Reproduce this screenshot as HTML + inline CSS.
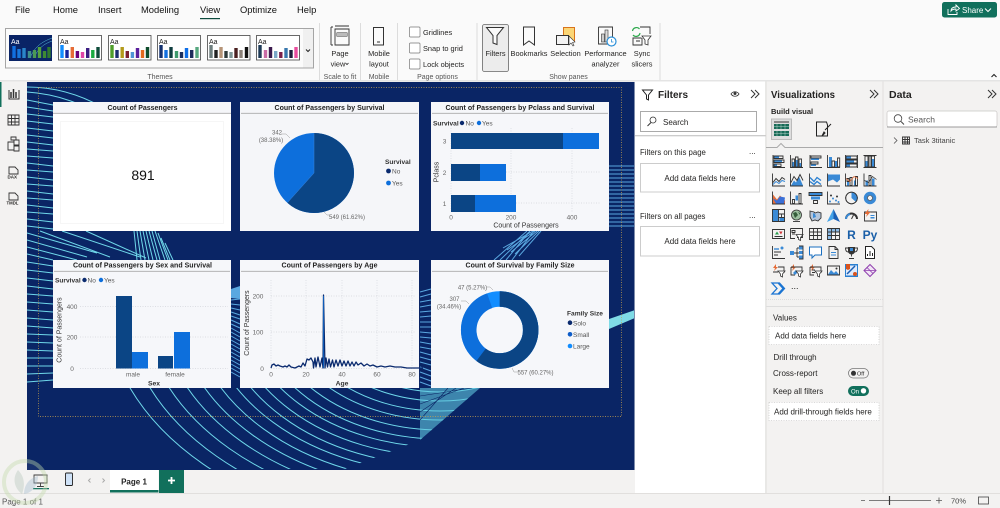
<!DOCTYPE html>
<html lang="en"><head><meta charset="utf-8"><title>Power BI Desktop</title>
<style>
html,body{margin:0;padding:0;width:1000px;height:508px;overflow:hidden;background:#f3f2f1}
svg{display:block}
text{font-family:"Liberation Sans",sans-serif;font-size:8px;fill:#252423}
.tab{font-size:9.4px;fill:#111}
.rb{font-size:7.4px;text-anchor:middle}
.grp{font-size:7px;text-anchor:middle;fill:#555}
.t{font-size:7px;font-weight:bold;text-anchor:middle;fill:#222}
.ax{font-size:6.5px;fill:#666;text-anchor:middle}
.axb{font-size:6.8px;fill:#333;text-anchor:middle;font-weight:bold}
.lb{font-size:6px;fill:#666;text-anchor:middle}
.lg{font-size:6.5px;fill:#555}
.lt{font-size:6.6px;fill:#333;font-weight:bold}
.h{font-size:10.5px;font-weight:bold;fill:#252423}
.s{font-size:8px;fill:#252423}
.ln{fill:none;stroke:#6fd8ea;stroke-width:1}
.lb2{fill:none;stroke:#5aa8e0;stroke-width:1}
.ic{fill:none;stroke:#333;stroke-width:.9}
.bl{fill:#3a8ad6;stroke:none}
.gr{stroke:#d3d6dc;stroke-width:.7;stroke-dasharray:1 1.5;fill:none}
.th{fill:#fff;stroke:#444;stroke-width:.8}
.tb{stroke-width:3.4;fill:none}
.sep{stroke:#dcdcdc;stroke-width:1}
</style></head><body>
<svg xmlns="http://www.w3.org/2000/svg" width="1000" height="508" viewBox="0 0 1000 508">
<defs>
<clipPath id="cv"><rect x="27" y="82" width="607" height="387"/></clipPath>
<clipPath id="arc"><path d="M27 388H480L420 440 345 469H27z"/></clipPath>
<g id="i1"><path class="ic" d="M1 0V12.5H13"/><path class="bl" d="M2 1h5v2.5H2zM2 5h8v2.5H2zM2 9h3v2.5H2z"/><path class="ic" d="M2 1h9v2.5H2zM2 5h10v2.5H2zM2 9h7v2.5H2z"/></g>
<g id="i2"><path class="ic" d="M.5 0V12.5H13"/><path class="bl" d="M2 7h2.5v5H2zM5.5 5h2.5v7H5.5zM9 8h2.5v4H9z"/><path class="ic" d="M2 4h2.5v8H2zM5.5 2h2.5v10H5.5zM9 4h2.5v8H9z"/></g>
<g id="i3"><path class="ic" d="M1 0V12.5H13"/><path class="bl" d="M2 3h8v2H2zM2 9h5v2H2z"/><path class="ic" d="M2 1h10v2H2zM2 7h7v2H2z"/></g>
<g id="i4"><path class="ic" d="M.5 0V12.5H13"/><path class="bl" d="M2 2h3v10H2zM8 6h2.500v6H8z"/><path class="ic" d="M5 6h2.500v6H5zM10.500 3h2.200v9h-2.200z"/></g>
<g id="i5"><path class="ic" d="M.5 0V13M12.500 0V13"/><path class="bl" d="M1 1h5v3H1zM1 5h8v3H1zM1 9h4v3H1z"/><path class="ic" d="M1 1h11v3H1zM1 5h11v3H1zM1 9h11v3H1z"/></g>
<g id="i6"><path class="ic" d="M0 .5H13M0 12.500H13"/><path class="bl" d="M1.500 6h3v6h-3zM8 4h3v8H8z"/><path class="ic" d="M1.500 1h3v11h-3zM5.500 1h2v11h-2zM8 1h3v11H8z"/></g>
<g id="i7"><path class="ic" d="M.5 0V12.500H13"/><path d="M1 9l3-4 3 3 3-4 3 2" fill="none" stroke="#333"/><path d="M1 11l3-3 3 2 3-3 3 1" fill="none" stroke="#3a8ad6"/></g>
<g id="i8"><path class="ic" d="M.5 0V12.500H13"/><path class="bl" d="M1 12l3-5 2 2 3-6 4 9z"/><path class="ic" d="M1 9l3-6 3 4 3-6 3 6"/></g>
<g id="i9"><path class="ic" d="M.5 0V12.500H13"/><path d="M1 4l4 4 3-4 4 3M1 8l4 3 3-3 4 3" fill="none" stroke="#2a7fd0" stroke-width="1.300"/></g>
<g id="i10"><path class="ic" d="M.5 0V12.500H13"/><path class="bl" d="M1 1h12v5l-3 3-4-3-5 2z"/></g>
<g id="i11"><path class="ic" d="M.5 0V12.500H13"/><path class="bl" d="M2 8h2v4H2zM9 7h2v5H9z"/><path class="ic" d="M5 4h2v8H5zM2 5h2v3H2zM10.500 3h2v9h-2z"/><path d="M1 5l4 3 4-5 4 2" fill="none" stroke="#e66c37" stroke-width=".7"/></g>
<g id="i12"><path class="ic" d="M.5 0V12.500H13"/><path class="bl" d="M2 7h2.500v5H2zM8.500 5h2.500v7H8.500z"/><path class="ic" d="M5.500 2h2v10h-2z"/><path d="M1 7l4 2 4-6 4 3" fill="none" stroke="#333" stroke-width=".7"/></g>
<g id="i13"><path class="ic" d="M.5 0V12.500H13"/><path d="M1 3l4 5 3-4 5 5v3H1z" fill="#e66c37"/><path d="M1 7l4 2 3-4 5 1-1 6H4z" fill="#3a6fd6"/></g>
<g id="i14"><path class="ic" d="M.5 0V12.500H13M2.500 8h2v4h-2zM9 2h2v10H9z"/><path class="bl" d="M5.500 4h2.500v5H5.500z"/></g>
<g id="i15"><path class="bl" d="M0 1h13v3H0z"/><path class="ic" d="M0 1h13v3H0z"/><path class="bl" d="M2 5h9v3H2z"/><path class="ic" d="M4.500 9h4v3h-4z"/></g>
<g id="i16"><path class="ic" d="M.5 0V12.500H13"/><circle class="bl" cx="3" cy="10" r="1"/><circle class="bl" cx="6" cy="7" r="1"/><circle class="bl" cx="9" cy="9" r="1"/><circle cx="4" cy="4" r="1" fill="#333"/><circle cx="10" cy="5" r="1" fill="#333"/><circle class="bl" cx="11.500" cy="10.500" r="1"/></g>
<g id="i17"><circle cx="6.500" cy="6.500" r="5.800" class="ic"/><path class="bl" d="M6.500 6.500V.7A5.800 5.800 0 0 1 11 10.500z"/><circle cx="6.500" cy="6.500" r="5.800" class="ic"/></g>
<g id="i18"><circle cx="6.500" cy="6.500" r="4.500" fill="none" stroke="#3a8ad6" stroke-width="3.400"/><circle cx="6.500" cy="6.500" r="2.500" fill="none" stroke="#333" stroke-width=".6"/></g>
<g id="i19"><path class="bl" d="M0 0h6.500v13H0zM7.500 8H13v5H7.500z"/><path class="ic" d="M.5.500h12v12H.5zM6.500.500v12M6.500 5h6M6.500 8.500h6M9.500 5v3.500"/></g>
<g id="i20"><circle cx="6.500" cy="6" r="5" fill="#9dbfa0" stroke="#333" stroke-width=".8"/><path d="M3 4l3-1 2 3-3 3zM8 3l2 1v2z" fill="#355e3b"/><path class="ic" d="M3 12.500h7"/></g>
<g id="i21"><path d="M1 2l4 1 1 1 3-1 3 1v5l-3 3-3-1-3 1-2-4z" fill="#b4c6dc" stroke="#333" stroke-width=".9"/><path class="bl" d="M4 4l2 1 1 3-3 1z"/></g>
<g id="i22"><path d="M6.500 0L13 13 6.500 10z" fill="#1a5fb4"/><path d="M6.500 0L0 13 6.500 10z" fill="#45a3e8"/></g>
<g id="i23"><path d="M1 10A5.500 5.500 0 0 1 12 10" fill="none" stroke="#333" stroke-width="2"/><path d="M1 10A5.500 5.500 0 0 1 5 5" fill="none" stroke="#3a8ad6" stroke-width="2"/><path d="M6.500 10l2-4" stroke="#333"/></g>
<g id="i24"><path class="ic" d="M1 3h12v9H1z"/><path d="M5 0L1 5h2.500L2.500 8 7 3H4.500z" fill="#e66c37"/><path class="bl" d="M7 6h4v1H7zM7 8h4v1.500H7z"/></g>
<g id="i25"><path class="ic" d="M.5 2h12v9H.5z"/><path d="M3 7l2-3 2 3z" fill="#2a9d4e"/><path d="M7 4h3.500L9 7z" fill="#d13438"/><path d="M2.500 9h8" stroke="#333"/></g>
<g id="i26"><path class="ic" d="M.5 1h12v9H7"/><path class="ic" d="M.5 1v10H5M2 3h3v2H2zM2 6.500h3"/><path d="M6 7h7L10.500 10v3L8.500 12v-2z" fill="#fff" stroke="#333" stroke-width=".8"/></g>
<g id="i27"><path class="ic" d="M.5 1h12v11H.5zM.5 4.500h12M.5 8h12M4.500 1v11M8.500 1v11"/></g>
<g id="i28"><path d="M.5 1h12v3.500H.5zM.5 1h4v11h-4z" fill="#8dbbe6"/><path class="ic" d="M.5 1h12v11H.5zM.5 4.500h12M.5 8h12M4.500 1v11M8.500 1v11"/></g>
<g id="i31"><path class="ic" d="M.5 0V12.500H13M2 9h4M2 6h7"/><path d="M2 3h5" stroke="#3a8ad6" stroke-width="1.400"/><circle cx="10" cy="2" r="1.500" fill="#3a8ad6"/></g>
<g id="i32"><path class="bl" d="M0 5h4v4H0zM9 0h4v3.500H9zM9 5h4v3H9zM9 9.500h4V13H9z"/><path class="ic" d="M4 7h5M7 2v9M7 2h2M7 11h2M9 0h4v13H9"/></g>
<g id="i33"><path d="M.5 1h12v8H6L3 12V9H.5z" fill="#fff" stroke="#1a6fc0"/></g>
<g id="i34"><path class="ic" d="M2 .5h6l3 3v9H2zM8 .5v3h3"/><path class="bl" d="M4 6h5v1H4zM4 8.500h5v1H4z"/></g>
<g id="i35"><path d="M3 1h7v4a3.500 3.500 0 0 1-7 0z" fill="#333"/><path class="ic" d="M3 2H.5c0 3 1 4 3 4M10 2h2.500c0 3-1 4-3 4M6.500 8.500v2M4 12.500h5"/><path class="bl" d="M5 2h3v3H5z"/></g>
<g id="i36"><path d="M2 .5h6l3 3v9H2z" fill="#fff" stroke="#222"/><path d="M4 10V8M6.500 10V5M9 10V7" stroke="#222"/></g>
<g id="i37"><path d="M4 0L1 4h2L2 7l4-4H4z" fill="#e66c37"/><path class="ic" d="M1 8h5M6 3h6v6"/><path d="M6 7h7L10.500 10v3L8.500 12v-2z" fill="#fff" stroke="#333" stroke-width=".8"/></g>
<g id="i38"><path d="M4 0L1 4h2L2 7l4-4H4z" fill="#e66c37"/><path class="ic" d="M1 3h11v6M1 3v8h4"/><path class="bl" d="M3 9l3-3 2 2-3 3z"/><path d="M6 7h7L10.500 10v3L8.500 12v-2z" fill="#fff" stroke="#333" stroke-width=".8"/></g>
<g id="i39"><path d="M4 0L1 4h2L2 7l4-4H4z" fill="#e66c37"/><path class="ic" d="M1 3h11v6M1 3v8h4M3 6h3M3 8.500h3"/><path d="M6 7h7L10.500 10v3L8.500 12v-2z" fill="#fff" stroke="#333" stroke-width=".8"/></g>
<g id="i40"><path class="ic" d="M.5 2h12v9H.5z"/><path class="bl" d="M1 10.500L4 6l3 3 2-2 3 3.500z"/><circle cx="9.500" cy="4.500" r="1" fill="#333"/></g>
<g id="i41"><path d="M0 0h13v13H0z" fill="#2a7fd0"/><path d="M1 1.500h11v10H1z" fill="#dfeafb"/><path d="M2 10l8-8" stroke="#1a5fb4" stroke-width="1.500"/><path d="M1 0h4v5L3 6 1 5z" fill="#d9541e"/><circle cx="10" cy="10" r="2" fill="#d9541e"/></g>
<g id="i42"><path d="M6.500.5L12.500 6.500 6.500 12.500.5 6.500z" fill="#f1e4f5" stroke="#8f3fae"/><path d="M.5 6.500H12.500M3.500 3.500L9.500 9.500" stroke="#8f3fae" stroke-width=".8"/></g>
<g id="i43"><path d="M0 1h6l5 5.500L6 12H0l5-5.500zM5 1h2.500l5 5.500L7.500 12H5" fill="none" stroke="#1a74d2" stroke-width="1.300"/></g>
</defs>

<!-- base -->
<rect width="1000" height="508" fill="#f3f2f1"/>
<rect width="1000" height="80" fill="#fafafa"/>
<rect y="80" width="1000" height="1.500" fill="#e4e4e4"/>

<!-- menu tabs -->
<text class="tab" x="15" y="13">File</text>
<text class="tab" x="53" y="13">Home</text>
<text class="tab" x="98" y="13">Insert</text>
<text class="tab" x="141" y="13">Modeling</text>
<text class="tab" x="200" y="13">View</text>
<rect x="200" y="18" width="20" height="1.200" fill="#0c4a3c"/>
<text class="tab" x="240" y="13">Optimize</text>
<text class="tab" x="297" y="13">Help</text>

<!-- Share -->
<rect x="942" y="2" width="55" height="15.500" rx="2.500" fill="#11705c"/>
<path d="M948 9v5.500h9V12M951 11c0-3 2-4 5-4V5l3.500 3.500L956 11V9c-2 0-4 .5-5 2z" fill="none" stroke="#fff" stroke-width=".9"/>
<text x="962" y="13" style="font-size:8px;fill:#fff">Share</text>
<path d="M985 8.500l3 3 3-3" fill="none" stroke="#fff"/>
<path d="M991.500 77l2.500-2.500 2.500 2.500" fill="none" stroke="#222" stroke-width="1.100"/>

<!-- themes -->
<rect x="5.500" y="28.500" width="308" height="39.500" fill="#fbfbfb" stroke="#a5a5a5"/>
<rect x="303" y="29" width="10" height="38.500" fill="#f0f0f0"/>
<path d="M306 49.500l2 2 2-2" fill="none" stroke="#222"/>
<rect x="9" y="35" width="43" height="26" fill="#0a2466"/>
<path d="M30 58c5-12 12-16 22-20M34 58c4-10 10-14 18-17" fill="none" stroke="#5cc6e0" stroke-width=".5"/>
<text x="11" y="44" style="font-size:7px;fill:#fff">Aa</text>
<g class="tb"><path stroke="#1170e0" d="M14 58v-12"/><path stroke="#1878dd" d="M19 58v-9"/><path stroke="#2a86c9" d="M24 58v-10"/><path stroke="#3f8f8a" d="M29.500 58v-7"/><path stroke="#4b9a55" d="M34.500 58v-8"/><path stroke="#55a23f" d="M39.500 58v-11"/><path stroke="#3e8a34" d="M44.500 58v-7"/><path stroke="#2f7a2f" d="M49 58v-11"/></g>
<rect class="th" x="58.500" y="35.500" width="43" height="24.500"/><text x="60" y="44" style="font-size:7px">Aa</text>
<g class="tb"><path stroke="#118dff" d="M62 58v-13"/><path stroke="#12239e" d="M67 58v-8"/><path stroke="#e66c37" d="M72.300 58v-11"/><path stroke="#6b007b" d="M77.400 58v-7"/><path stroke="#e044a7" d="M82.500 58v-6"/><path stroke="#3b1d82" d="M87.700 58v-10"/><path stroke="#1aab40" d="M92.800 58v-8"/><path stroke="#0f4d3a" d="M98 58v-11"/></g>
<rect class="th" x="108.500" y="35.500" width="42.500" height="24.500"/><text x="110" y="44" style="font-size:7px">Aa</text>
<g class="tb"><path stroke="#4f9e2a" d="M112 58v-13"/><path stroke="#1b2e6e" d="M117 58v-8"/><path stroke="#b39a1a" d="M122.200 58v-11"/><path stroke="#7a1f2f" d="M127.300 58v-7"/><path stroke="#4f93d6" d="M132.400 58v-6"/><path stroke="#5a1f9c" d="M137.500 58v-10"/><path stroke="#e36a1f" d="M142.500 58v-8"/><path stroke="#0f4d2d" d="M147.500 58v-11"/></g>
<rect class="th" x="157.500" y="35.500" width="43" height="24.500"/><text x="159" y="44" style="font-size:7px">Aa</text>
<g class="tb"><path stroke="#12306e" d="M161 58v-13"/><path stroke="#1170e0" d="M166 58v-8"/><path stroke="#0f3d3f" d="M171 58v-11"/><path stroke="#3d9a6b" d="M176.500 58v-7"/><path stroke="#1a2f5e" d="M181.500 58v-6"/><path stroke="#0f6fe8" d="M186.500 58v-10"/><path stroke="#1d2b5b" d="M191.700 58v-8"/><path stroke="#57a87f" d="M197 58v-11"/></g>
<rect class="th" x="207.500" y="35.500" width="42.500" height="24.500"/><text x="209" y="44" style="font-size:7px">Aa</text>
<g class="tb"><path stroke="#6f7f7f" d="M211 58v-13"/><path stroke="#222" d="M216 58v-8"/><path stroke="#b69477" d="M221 58v-11"/><path stroke="#2e3a3a" d="M226 58v-7"/><path stroke="#7f9797" d="M231 58v-6"/><path stroke="#4a2020" d="M236 58v-10"/><path stroke="#8a8078" d="M241 58v-8"/><path stroke="#111" d="M246.500 58v-11"/></g>
<rect class="th" x="256.500" y="35.500" width="43" height="24.500"/><text x="258" y="44" style="font-size:7px">Aa</text>
<g class="tb"><path stroke="#1f3b57" d="M260 58v-13"/><path stroke="#c96ba6" d="M265.500 58v-8"/><path stroke="#3b1a4d" d="M270.500 58v-11"/><path stroke="#7aa7c7" d="M275.700 58v-7"/><path stroke="#7a1f4a" d="M280.800 58v-6"/><path stroke="#3878ad" d="M286 58v-10"/><path stroke="#1d1d3b" d="M291 58v-8"/><path stroke="#e94c9e" d="M296 58v-11"/></g>
<text class="grp" x="160" y="79">Themes</text>
<path class="sep" d="M319.500 23V80M360.500 23V80M397.500 23V80M477 23V80M660 23V80"/>

<!-- page view -->
<path class="ic" d="M331 27v18M331 27h2M331 45h2M335 29h14v16h-14zM335 26h14M337 33h10v3h-10z"/><rect x="337" y="33" width="10" height="3" fill="#bbb"/>
<text class="rb" x="340" y="56">Page</text><text class="rb" x="338" y="66.500">view</text><path d="M345.500 63l1.500 1.500 1.500-1.500" fill="none" stroke="#222" stroke-width=".8"/>
<text class="grp" x="340" y="79">Scale to fit</text>
<!-- mobile -->
<path d="M373.500 27.500h10v17.500h-10zM377 42h3" fill="none" stroke="#333"/>
<text class="rb" x="379" y="56">Mobile</text><text class="rb" x="379" y="66.500">layout</text>
<text class="grp" x="379" y="79">Mobile</text>
<!-- page options -->
<rect x="409.500" y="27" width="10.500" height="10" rx="1" fill="#fff" stroke="#777" stroke-width=".7"/>
<rect x="409.500" y="43" width="10.500" height="10" rx="1" fill="#fff" stroke="#777" stroke-width=".7"/>
<rect x="409.500" y="59" width="10.500" height="10" rx="1" fill="#fff" stroke="#777" stroke-width=".7"/>
<text x="423" y="35" style="font-size:7.400px">Gridlines</text>
<text x="423" y="51" style="font-size:7.400px">Snap to grid</text>
<text x="423" y="67" style="font-size:7.400px">Lock objects</text>
<text class="grp" x="437.500" y="79">Page options</text>
<!-- show panes -->
<rect x="482.500" y="24.500" width="26" height="47" rx="2" fill="#ececec" stroke="#666" stroke-width=".8"/>
<path d="M486.500 27.500h17l-6.500 8v9l-4-1.500v-7.500z" fill="#fafafa" stroke="#333"/>
<text class="rb" x="495.500" y="56">Filters</text>
<path d="M523.500 27h11v18l-5.500-4-5.500 4z" fill="none" stroke="#333"/>
<text class="rb" x="529" y="56">Bookmarks</text>
<rect x="563.500" y="27.500" width="11" height="14" fill="#fbd676" stroke="#d9741c"/>
<rect x="556.500" y="35.500" width="12" height="9" fill="#f3f3f3" stroke="#333"/>
<path d="M569 36l0 9 2-2 2 3 1-.5-1.500-3 2.500-.5z" fill="#fff" stroke="#333" stroke-width=".6"/>
<text class="rb" x="565.500" y="56">Selection</text>
<path class="ic" d="M598.500 27h14v10M598.500 27v17h9"/><rect x="601.500" y="34" width="3" height="8" fill="#ccc" stroke="#333" stroke-width=".6"/><rect x="605" y="30" width="3" height="12" fill="#ddd" stroke="#333" stroke-width=".6"/>
<circle cx="611.500" cy="41.500" r="4.500" fill="#fff" stroke="#2a8fd8" stroke-width="1.200"/><path d="M611.500 39v3h2" fill="none" stroke="#2a8fd8" stroke-width=".8"/>
<text class="rb" x="605.500" y="56">Performance</text><text class="rb" x="605.500" y="66.500">analyzer</text>
<path d="M632.500 31a4 4 0 0 1 7-2M640 33a4 4 0 0 1-7 2" fill="none" stroke="#2aa84a" stroke-width="1.200"/>
<path class="ic" d="M640 27h10v7M632.500 38h9M633 38v7h9v-7M636 41h4"/>
<path d="M642 36h9l-3 4v5l-3-1v-4z" fill="#fff" stroke="#333" stroke-width=".8"/>
<text class="rb" x="642" y="56">Sync</text><text class="rb" x="642" y="66.500">slicers</text>
<text class="grp" x="568.500" y="79">Show panes</text>

<!-- left rail -->
<rect x="0" y="82" width="1.500" height="25" fill="#11705c"/>
<path d="M9 90v9h10V90" fill="none" stroke="#333"/><path d="M11 98V92M13.500 98V89M16 98V92" stroke="#333" stroke-width="1.500"/>
<path class="ic" d="M8 115h11v10H8zM8 118.500h11M8 122h11M11.500 115v10M15 115v10"/>
<path class="ic" d="M8 142h6v8H8zM14 140h5v5h-5zM14 146h5v5h-5zM11 137h5v3h-5z"/>
<path class="ic" d="M9 167h6l3 3v4H9z"/><text x="7.500" y="178.500" style="font-size:4.500px;font-weight:bold">DAX</text>
<path class="ic" d="M9 193h6l3 3v4H9z"/><text x="6.500" y="204.500" style="font-size:4.300px;font-weight:bold">TMDL</text>

<!-- canvas -->
<rect x="27" y="82" width="607.500" height="388" fill="#0a2565"/>
<g clip-path="url(#cv)">
<path class="ln" d="M27 92c30 2 60 12 80 30M27 87c25 0 50 6 75 20M27 100l26 5M27 107l26 4M27 114l26 3M27 121l26 3M27 128l26 3M27 135l26 3M27 142l26 3M27 149l26 2M27 156l26 2M27 163l26 3M27 170l26 2M27 177l26 3M27 184l26 2M27 191l26 3M27 198l26 2M27 205l26 3M27 212l26 2M27 219l26 3M27 226l26 3M27 233l70 20M27 240l60 17M27 247l50 13M40 231l70 26M62 231l78 26M86 231l60 27M27 254l26 6M27 262l26 4M27 270l26 3M27 278l26 3M27 286l26 3M27 294l26 2M27 302l26 2M27 310l26 2M27 318l26 2M27 326l26 2M27 334l26 1M27 342l26 1M27 350l26 1M27 358l26 0M27 366l26 0M27 374l26 -1M27 382l26 -2"/>
<path class="ln" d="M134 231l3 29M137 231l4 29M140 231l5 29M143 231l6 29M146 231l7 29M149 231l8 29M152 231l8 29M155 231l10 29M158 233l10 27M161 238l9 22M165 243l8 17"/>
<g class="ln" clip-path="url(#arc)">
<ellipse cx="440" cy="300" rx="124" ry="92"/><ellipse cx="440" cy="300" rx="137" ry="101"/><ellipse cx="440" cy="300" rx="150" ry="111"/><ellipse cx="440" cy="300" rx="162" ry="120"/><ellipse cx="440" cy="300" rx="175" ry="130"/><ellipse cx="440" cy="300" rx="187" ry="139"/><ellipse cx="440" cy="300" rx="199" ry="147"/><ellipse cx="440" cy="300" rx="211" ry="156"/><ellipse cx="440" cy="300" rx="223" ry="165"/><ellipse cx="440" cy="300" rx="236" ry="173"/><ellipse cx="440" cy="300" rx="250" ry="182"/><ellipse cx="440" cy="300" rx="265" ry="191"/><ellipse cx="440" cy="300" rx="281" ry="200"/><ellipse cx="440" cy="300" rx="298" ry="210"/><ellipse cx="440" cy="300" rx="316" ry="221"/><ellipse cx="440" cy="300" rx="335" ry="232"/>
</g>
<path class="lb2" d="M231 296l9-3M231 300l9-1M231 304l9 1M231 308l9 2M231 312l9 3M231 316l9 3M231 320l9 4M231 324l9 4M231 328l9 5M231 332l9 5M231 336l9 5M231 340l9 5M231 344l9 5M231 348l9 5M231 352l9 5M231 356l9 5M231 360l9 5M231 364l9 5M231 368l9 5M231 372l9 5"/>
<path d="M231 289l9-3v13l-9-1z" fill="#5aa8e0"/>
<path class="lb2" d="M609 166h26M609 170h26M609 174h26M609 178h26M609 182h26M609 186h26M609 190h26M609 194h26M609 198h26M609 202h26M609 206h26M609 210h26M609 214h26M609 218h26M609 222h26M609 226h26"/>
<path class="lb2" d="M503 248l30-17M507 250l28-19M511 252l26-21M515 254l24-23M519 256l22-25M494 260l33-29M500 260l30-29M506 260l24-29M512 260l22-29"/>
<path d="M609 319l26-9v8l-26 11z" fill="#7fdbe6"/>
<path class="lb2" d="M420 292l11-3M420 297l11-3M420 302l11-2M420 307l11-2M420 312l11-1M420 317l11-1M420 322l11 0M420 327l11 0M420 332l11 1M420 337l11 1M420 342l11 2M420 347l11 2M420 352l11 3M420 357l11 3M420 362l11 3M420 367l11 4M420 372l11 4M420 377l11 4M420 382l11 4"/>
<path d="M420 388h60l-60 52z" fill="#5fc6de" opacity=".6"/>
<path d="M420 396l52-8M420 404l44-16M420 412l36-24M420 420l28-32" stroke="#0a2565" stroke-width=".6"/>
</g>
<rect x="38.500" y="87.500" width="583" height="329" fill="none" stroke="#c9a14d" stroke-width=".7" stroke-dasharray="1 1.500"/>

<!-- card 1 -->
<rect x="53" y="102" width="178" height="129" fill="#fff"/>
<rect x="53" y="102" width="178" height="11" fill="#f5f6f9"/>
<path d="M53 113.300h178" stroke="#aaa" stroke-width=".8"/>
<rect x="60.500" y="121.500" width="163" height="102" fill="none" stroke="#f6f6f6"/>
<text class="t" x="142.500" y="110" textLength="70" lengthAdjust="spacing">Count of Passengers</text>
<text x="143" y="180" style="font-size:14px;text-anchor:middle;fill:#111">891</text>

<!-- card 2 -->
<rect x="240" y="102" width="179" height="129" fill="#f5f6f9"/>
<path d="M241 113.300h177" stroke="#aaa" stroke-width=".8"/>
<text class="t" x="329.500" y="110" textLength="110" lengthAdjust="spacing">Count of Passengers by Survival</text>
<circle cx="314" cy="173" r="40" fill="#0d6fdc"/>
<path d="M314 173V133A40 40 0 1 1 287.300 202.800z" fill="#0b4585"/>
<path d="M314 173V133M314 173L287.300 202.800" stroke="#3b86dc" stroke-width=".5"/>
<text class="lb" x="277" y="134.500">342</text><text class="lb" x="271" y="142">(38.38%)</text>
<path d="M281 134h5l4 4" fill="none" stroke="#999" stroke-width=".5"/>
<text class="lb" x="347" y="219">549 (61.62%)</text>
<path d="M324 212l3 3h4" fill="none" stroke="#999" stroke-width=".5"/>
<text class="lt" x="385" y="164">Survival</text>
<circle cx="388.500" cy="171" r="2.400" fill="#0a2a6e"/><text class="lg" x="392" y="173.500">No</text>
<circle cx="388.500" cy="183" r="2.400" fill="#0d6fdc"/><text class="lg" x="392" y="185.500">Yes</text>

<!-- card 3 -->
<rect x="431" y="102" width="178" height="129" fill="#f6f7fa"/>
<path d="M432 113.300h176" stroke="#aaa" stroke-width=".8"/>
<text class="t" x="520" y="110" textLength="149" lengthAdjust="spacing">Count of Passengers by Pclass and Survival</text>
<text class="lt" x="433" y="125.500">Survival</text>
<circle cx="462" cy="123" r="2.200" fill="#0a2a6e"/><text class="lg" x="465.500" y="125.500">No</text>
<circle cx="479" cy="123" r="2.200" fill="#0d6fdc"/><text class="lg" x="482" y="125.500">Yes</text>
<path class="gr" d="M451 128v84M511 128v84M572 128v84M451 172h150M451 203h150"/>
<rect x="451" y="133" width="112" height="16" fill="#0b4585"/><rect x="563" y="133" width="36" height="16" fill="#0d6fdc"/>
<rect x="451" y="164" width="29" height="17" fill="#0b4585"/><rect x="480" y="164" width="26" height="17" fill="#0d6fdc"/>
<rect x="451" y="195" width="24" height="17" fill="#0b4585"/><rect x="475" y="195" width="41" height="17" fill="#0d6fdc"/>
<text class="ax" x="444.500" y="143.500">3</text><text class="ax" x="444.500" y="175">2</text><text class="ax" x="444.500" y="206">1</text>
<text class="ax" x="451" y="219.500">0</text><text class="ax" x="511" y="219.500">200</text><text class="ax" x="572" y="219.500">400</text>
<text class="axb" x="526" y="227.500" style="font-weight:normal;font-size:7px">Count of Passengers</text>
<text class="axb" transform="translate(438.500 172) rotate(-90)" style="font-weight:normal;font-size:7px">Pclass</text>

<!-- card 4 -->
<rect x="53" y="260" width="178" height="128" fill="#f6f7fa"/>
<path d="M54 271.300h176" stroke="#aaa" stroke-width=".8"/>
<text class="t" x="142.500" y="267.500" textLength="139" lengthAdjust="spacing">Count of Passengers by Sex and Survival</text>
<text class="lt" x="55" y="282.500">Survival</text>
<circle cx="84.500" cy="280" r="2.200" fill="#0a2a6e"/><text class="lg" x="87.500" y="282.500">No</text>
<circle cx="101" cy="280" r="2.200" fill="#0d6fdc"/><text class="lg" x="104" y="282.500">Yes</text>
<path class="gr" d="M80 306.500h148M80 337h148M80 368.500h148"/>
<rect x="116" y="296" width="16" height="72.500" fill="#0b4585"/><rect x="132" y="352" width="16" height="16.500" fill="#0d6fdc"/>
<rect x="158" y="356" width="15" height="12.500" fill="#0b4585"/><rect x="174" y="332" width="16" height="36.500" fill="#0d6fdc"/>
<text class="ax" x="72" y="309">400</text><text class="ax" x="72" y="339.500">200</text><text class="ax" x="72" y="371">0</text>
<text class="ax" x="133" y="376.500">male</text><text class="ax" x="175" y="376.500">female</text>
<text class="axb" x="154" y="385.500">Sex</text>
<text class="axb" transform="translate(61.500 330) rotate(-90)" style="font-weight:normal;font-size:7px">Count of Passengers</text>

<!-- card 5 -->
<rect x="240" y="260" width="179" height="128" fill="#f6f7fa"/>
<path d="M241 271.300h177" stroke="#aaa" stroke-width=".8"/>
<text class="t" x="329.500" y="267.500" textLength="96" lengthAdjust="spacing">Count of Passengers by Age</text>
<path class="gr" d="M271 296h145M271 332h145M271 368.500h145M271 280v89M306 280v89M342 280v89M377 280v89M412 280v89"/>
<path d="M271 368l1-3 2-1 2 2 2-1 2 1 3 1 2-1 2 1 2-2 2 2 4 1 4-2 2 1 2-4 2 3 2-7 2 1 2-2 2 4 .5 6 1.500-10 1 9 2-10 2 10 2-9 1 10 .5-73 1.500 73 1-10 1.500 9 1.500-8 1.500 8 2-7 1.500 7 2-7 2 6 2-6 2 6 2-5 2 5 2-5 2 5 2-4 2 4 2-4 2 3 3-2 3 3 3-2 3 2 3-1 4 2 4-1 4 1 5-1 5 1 6 0 6 1 8 0 8 0" fill="none" stroke="#0a2a6e" stroke-width="1.300" stroke-linejoin="round"/>
<path d="M323.500 296v72" stroke="#0d5cb8" stroke-width="1"/>
<text class="ax" x="258" y="298.500">200</text><text class="ax" x="258" y="334.500">100</text><text class="ax" x="262" y="371">0</text>
<text class="ax" x="271" y="376.500">0</text><text class="ax" x="306" y="376.500">20</text><text class="ax" x="342" y="376.500">40</text><text class="ax" x="377" y="376.500">60</text><text class="ax" x="412" y="376.500">80</text>
<text class="axb" x="342" y="385.500">Age</text>
<text class="axb" transform="translate(249 323) rotate(-90)" style="font-weight:normal;font-size:7px">Count of Passengers</text>

<!-- card 6 -->
<rect x="431" y="260" width="178" height="128" fill="#f6f7fa"/>
<path d="M432 271.300h176" stroke="#aaa" stroke-width=".8"/>
<text class="t" x="520" y="267.500" textLength="109" lengthAdjust="spacing">Count of Survival by Family Size</text>
<g transform="rotate(-90 499.700 330)" fill="none" stroke-width="15.500">
<circle cx="499.700" cy="330" r="31" stroke="#118dff"/>
<circle cx="499.700" cy="330" r="31" stroke="#0d6fdc" pathLength="100" stroke-dasharray="94.730 100"/>
<circle cx="499.700" cy="330" r="31" stroke="#0b4585" pathLength="100" stroke-dasharray="60.270 100"/>
</g>
<text class="lb" x="472.500" y="289.500">47 (5.27%)</text>
<path d="M487 287h3l3 3" fill="none" stroke="#999" stroke-width=".5"/>
<text class="lb" x="454.500" y="301">307</text><text class="lb" x="449" y="308.500">(34.46%)</text>
<path d="M461 301h5l3 3" fill="none" stroke="#999" stroke-width=".5"/>
<text class="lb" x="535.500" y="374.500">557 (60.27%)</text>
<path d="M512 368l2 4h5" fill="none" stroke="#999" stroke-width=".5"/>
<text class="lt" x="567" y="315.500">Family Size</text>
<circle cx="570" cy="322.700" r="2.300" fill="#0a2a6e"/><text class="lg" x="573" y="325.300">Solo</text>
<circle cx="570" cy="334.300" r="2.300" fill="#0d5cc8"/><text class="lg" x="573" y="337">Small</text>
<circle cx="570" cy="346" r="2.300" fill="#118dff"/><text class="lg" x="573" y="348.600">Large</text>

<!-- filters panel -->
<rect x="635" y="81.500" width="131" height="412" fill="#fff"/>
<path d="M642.500 90h10l-4 5v5l-2-1v-4z" fill="none" stroke="#222"/>
<text x="658" y="98" style="font-size:10px;font-weight:bold">Filters</text>
<path d="M731 94c2-3 6-3 8 0-2 3-6 3-8 0z" fill="none" stroke="#333" stroke-width=".8"/><circle cx="735" cy="93.500" r="1.500" fill="#333"/>
<path d="M751 90l4 4-4 4M755 90l4 4-4 4" fill="none" stroke="#333"/>
<rect x="640.500" y="111.500" width="116" height="20" fill="#fff" stroke="#aaa"/>
<circle cx="653" cy="120" r="3" fill="none" stroke="#333" stroke-width=".8"/><path d="M651 122.500l-3.500 3.500" stroke="#333"/>
<text x="663" y="125" style="font-size:8px">Search</text>
<path d="M635 135.700h131" stroke="#bbb"/>
<text x="640" y="155" style="font-size:7.800px">Filters on this page</text>
<text x="749" y="154" style="font-size:8px">...</text>
<rect x="640.500" y="163.500" width="119" height="28.500" fill="#fff" stroke="#ccc"/>
<text x="700" y="181" style="font-size:8px;text-anchor:middle">Add data fields here</text>
<text x="640" y="219" style="font-size:7.800px">Filters on all pages</text>
<text x="749" y="218" style="font-size:8px">...</text>
<rect x="640.500" y="226.500" width="119" height="29.500" fill="#fff" stroke="#ccc"/>
<text x="700" y="244" style="font-size:8px;text-anchor:middle">Add data fields here</text>

<!-- viz panel -->
<rect x="765.500" y="81.500" width=".8" height="412" fill="#d2d0ce"/>
<rect x="882.500" y="81.500" width="1" height="412" fill="#e1dfdd"/>
<text class="h" x="771" y="98" textLength="64" lengthAdjust="spacingAndGlyphs">Visualizations</text>
<path d="M870 90l4 4-4 4M874 90l4 4-4 4" fill="none" stroke="#333"/>
<text x="771" y="114" style="font-size:7.500px;font-weight:bold">Build visual</text>
<rect x="771.500" y="119" width="20" height="20.500" fill="#ddd" stroke="#bbb"/>
<path d="M774 122h15" stroke="#333"/><rect x="774" y="124" width="15" height="5" fill="#176b57"/><rect x="774" y="131" width="15" height="5" fill="#176b57"/>
<path d="M774 126.500h15M774 133.500h15M777 124v12M781 124v12M785 124v12" stroke="#d5e5e0" stroke-width=".4"/>
<path d="M816.500 122h10l1 3v11h-11zM825 130l6-6M822 136l2-4 1 1z" fill="none" stroke="#222"/>
<path d="M766 147.500h11l4-4 4 4h98" fill="none" stroke="#aaa"/>

<use href="#i1" x="772" y="155"/><use href="#i2" x="790" y="155"/><use href="#i3" x="809" y="155"/><use href="#i4" x="827" y="155"/><use href="#i5" x="845" y="155"/><use href="#i6" x="863.500" y="155"/>
<use href="#i7" x="772" y="173.500"/><use href="#i8" x="790" y="173.500"/><use href="#i9" x="809" y="173.500"/><use href="#i10" x="827" y="173.500"/><use href="#i11" x="845" y="173.500"/><use href="#i12" x="863.500" y="173.500"/>
<use href="#i13" x="772" y="191.500"/><use href="#i14" x="790" y="191.500"/><use href="#i15" x="809" y="191.500"/><use href="#i16" x="827" y="191.500"/><use href="#i17" x="845" y="191.500"/><use href="#i18" x="863.500" y="191.500"/>
<use href="#i19" x="772" y="209"/><use href="#i20" x="790" y="209"/><use href="#i21" x="809" y="209"/><use href="#i22" x="827" y="209"/><use href="#i23" x="845" y="209"/><use href="#i24" x="863.500" y="209"/>
<use href="#i25" x="772" y="227.500"/><use href="#i26" x="790" y="227.500"/><use href="#i27" x="809" y="227.500"/><use href="#i28" x="827" y="227.500"/>
<text x="851.500" y="239" style="font-size:12px;font-weight:bold;fill:#1a5fa8;text-anchor:middle">R</text>
<text x="870" y="239" style="font-size:12px;font-weight:bold;fill:#1a5fa8;text-anchor:middle">Py</text>
<use href="#i31" x="772" y="246"/><use href="#i32" x="790" y="246"/><use href="#i33" x="809" y="246"/><use href="#i34" x="827" y="246"/><use href="#i35" x="845" y="246"/><use href="#i36" x="863.500" y="246"/>
<use href="#i37" x="772" y="264"/><use href="#i38" x="790" y="264"/><use href="#i39" x="809" y="264"/><use href="#i40" x="827" y="264"/><use href="#i41" x="845" y="264"/><use href="#i42" x="863.500" y="264"/>
<use href="#i43" x="772" y="282"/>
<text x="791" y="289" style="font-size:9px">...</text>
<path d="M766 299.500h117" stroke="#ddd" stroke-dasharray="1 1"/>
<path d="M766 306.500h117" stroke="#ddd"/>
<text x="773" y="320.500" class="s">Values</text>
<rect x="769" y="326.500" width="110" height="18" fill="#fff" stroke="#bbb" stroke-width=".6" stroke-dasharray="1 1.500"/>
<text x="775" y="338.500" class="s">Add data fields here</text>
<text x="773.500" y="360" class="s">Drill through</text>
<text x="773" y="376" class="s">Cross-report</text>
<rect x="848.500" y="368.500" width="20" height="9.500" rx="4.700" fill="#f3f2f1" stroke="#777" stroke-width=".8"/>
<circle cx="853.500" cy="373.300" r="2.500" fill="#333"/><text x="857" y="375.500" style="font-size:5.500px">Off</text>
<text x="773" y="394" class="s">Keep all filters</text>
<rect x="848" y="386" width="21" height="10" rx="5" fill="#11705c"/>
<text x="851" y="393.500" style="font-size:6px;fill:#fff">On</text><circle cx="863.500" cy="390.800" r="2.700" fill="#fff"/>
<rect x="769" y="402.500" width="110" height="18" fill="#fff" stroke="#bbb" stroke-width=".6" stroke-dasharray="1 1.500"/>
<text x="774" y="414.500" class="s">Add drill-through fields here</text>

<!-- data panel -->
<text class="h" x="889" y="98">Data</text>
<path d="M988 90l4 4-4 4M992 90l4 4-4 4" fill="none" stroke="#333"/>
<rect x="887" y="111" width="110" height="16" rx="2" fill="#fff" stroke="#c8c6c4" stroke-width=".7"/>
<path d="M887 127h110" stroke="#888" stroke-width=".7"/>
<circle cx="898" cy="118.500" r="3.800" fill="none" stroke="#444" stroke-width=".8"/><path d="M901 121.500l3 3" stroke="#444"/>
<text x="908" y="122.500" style="font-size:8.500px;fill:#555">Search</text>
<path d="M894 137.500l3 3-3 3" fill="none" stroke="#555" stroke-width=".8"/>
<path class="ic" d="M902.500 137h7v7h-7zM902.500 139.500h7M902.500 142h7M905 137v7M907.500 137v7"/>
<text x="914" y="143" style="font-size:7.500px;fill:#444">Task 3titanic</text>

<!-- bottom bar -->
<rect x="0" y="470" width="635" height="23" fill="#f3f2f1"/>
<path class="ic" d="M34 475h13v8H34zM40.500 483v3M37 486.500h7"/>
<rect x="33" y="488" width="16" height="1.300" fill="#11705c"/>
<rect x="65.500" y="473" width="7" height="12.500" rx="1" fill="#cfe2f7" stroke="#222" stroke-width=".9"/>
<path d="M90.500 478.500l-2 2 2 2M102.500 478.500l2 2-2 2" fill="none" stroke="#aaa"/>
<rect x="110" y="470" width="48.500" height="22" fill="#fff"/>
<rect x="110" y="490" width="48.500" height="2.500" fill="#11705c"/>
<text x="134" y="484.500" style="font-size:8px;text-anchor:middle;font-weight:bold;fill:#222">Page 1</text>
<rect x="159" y="470" width="25" height="23" fill="#11705c"/>
<path d="M171.500 477v7M168 480.500h7" stroke="#fff" stroke-width="1.800"/>
<path d="M0 493.500h1000" stroke="#e1dfdd"/>
<text x="2" y="504.500" style="font-size:8px;fill:#555">Page 1 of 1</text>
<path d="M861 500.500h4M869 500.500h62M936 500.500h6M939 497.500v6" stroke="#555" stroke-width=".8"/>
<path d="M889.500 496v9" stroke="#333" stroke-width="1.200"/>
<text x="951" y="503.500" style="font-size:7.500px;fill:#444">70%</text>
<rect x="978.500" y="497" width="10" height="7" fill="none" stroke="#444" stroke-width=".8"/>

<!-- watermark -->
<g opacity=".42">
<circle cx="25" cy="482" r="21" fill="#fff" fill-opacity=".15" stroke="#c5dcae" stroke-width="4"/>
<path d="M18 470c-6 8-4 18 4 24 3-8 3-17-4-24z" fill="#b9c9bd"/>
<path d="M24 494c8-1 14-8 14-18-8 2-14 8-14 18z" fill="#a9bfd0"/>
</g>
</svg>
</body></html>
